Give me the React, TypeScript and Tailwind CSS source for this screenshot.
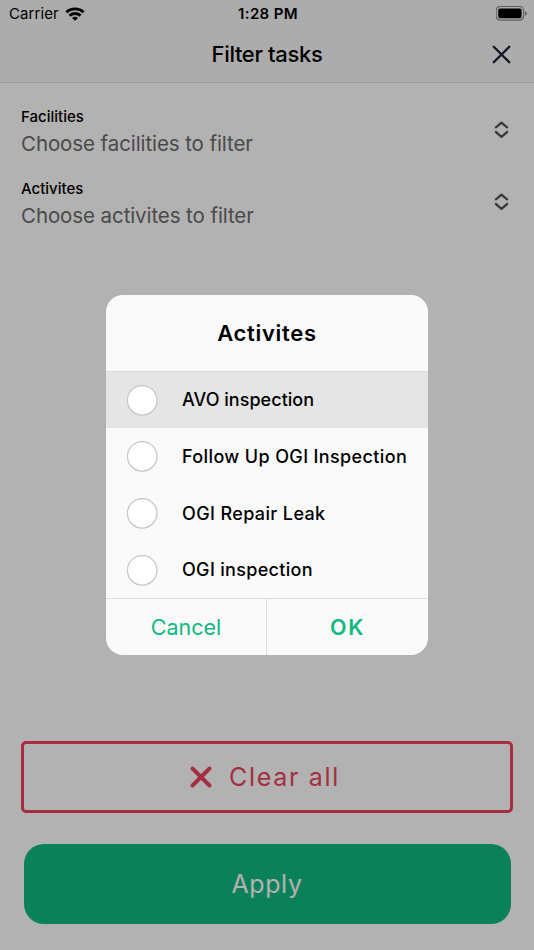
import { useState } from "react";
import { X } from "lucide-react";

const activities = [
  { name: "AVO inspection", spacing: "tracking-[0.03px]" },
  { name: "Follow Up OGI Inspection", spacing: "tracking-[0.37px]" },
  { name: "OGI Repair Leak", spacing: "tracking-[0.37px]" },
  { name: "OGI inspection", spacing: "tracking-[0.32px]" },
];

const StatusBar: React.FC = () => {
  return (
    <div className="grid h-[27px] grid-cols-3 items-center pr-[7px] pl-[9px] text-[15px] leading-none text-black">
      <div className="flex items-center gap-[6px]">
        <span className="tracking-[0.1px]">Carrier</span>
        <svg width="20" height="14" viewBox="0 0 19 14" fill="none" stroke="#000" strokeWidth="2.8">
          <path d="M0.8 5.2C5.6 0.7 13.4 0.7 18.2 5.2" />
          <path d="M4 8.6C7.1 5.8 11.9 5.8 15 8.6" />
          <path d="M9.5 13.8L6.5 10.9C8.3 9.5 10.7 9.5 12.5 10.9Z" fill="#000" stroke="none" />
        </svg>
      </div>
      <span className="text-center font-semibold tracking-[0.35px]">1:28 PM</span>
      <svg className="justify-self-end" width="31" height="15" viewBox="0 0 31 15">
        <rect x="0.2" y="0.4" width="27.4" height="13.8" rx="4" fill="none" stroke="#000" strokeOpacity="0.45" strokeWidth="1.2" />
        <rect x="2.2" y="2.4" width="23.4" height="9.8" rx="1.6" fill="#000" />
        <path d="M29 5.2C31.2 6 31.2 8.8 29 9.6Z" fill="#000" fillOpacity="0.5" />
      </svg>
    </div>
  );
};

const SelectField: React.FC<{ label: string; placeholder: string }> = ({ label, placeholder }) => {
  return (
    <button className="flex h-[72px] w-full items-center justify-between pr-[25px] pl-[21px] text-left">
      <span className="flex flex-col pt-[5px]">
        <span className="text-[15px] leading-[22px] font-medium text-black">{label}</span>
        <span className="text-[20.5px] leading-8 tracking-[-0.09px] text-[#6a6a6a]">{placeholder}</span>
      </span>
      <svg
        width="15"
        height="18"
        viewBox="0 0 15 18"
        fill="none"
        stroke="#505050"
        strokeWidth="2.2"
        strokeLinejoin="round"
      >
        <path d="M1.2 7L7.5 1.6L13.8 7" />
        <path d="M1.2 10.4L7.5 15.8L13.8 10.4" />
      </svg>
    </button>
  );
};

const App: React.FC = () => {
  const [selected, setSelected] = useState<string[]>([]);

  const toggle = (name: string) => {
    setSelected((s) => (s.includes(name) ? s.filter((n) => n !== name) : [...s, name]));
  };

  return (
    <div className="relative h-[950px] w-full overflow-hidden bg-white font-['Inter',sans-serif]">
      <div className="flex h-full flex-col">
        {/* Header */}
        <header className="h-[83px] border-b border-[#dedede] bg-[#f7f7f7]">
          <StatusBar />
          <div className="grid h-[54px] grid-cols-[1fr_auto_1fr] items-center px-[17px]">
            <h1 className="col-start-2 text-[22px] leading-none font-medium tracking-[-0.35px] text-black">
              Filter tasks
            </h1>
            <button className="justify-self-end">
              <X size={31} strokeWidth={1.8} className="text-[#18213a]" />
            </button>
          </div>
        </header>

        {/* Filters */}
        <div className="pt-[11px]">
          <SelectField label="Facilities" placeholder="Choose facilities to filter" />
          <SelectField label="Activites" placeholder="Choose activites to filter" />
        </div>

        {/* Buttons */}
        <div className="mt-auto flex flex-col pb-[26px]">
          <button className="mx-[21px] flex h-[72px] items-center justify-center gap-[11px] rounded-[5px] border-[3px] border-[#ee425c] pr-[10px] text-[#ee425c]">
            <X size={34} strokeWidth={2.8} />
            <span className="text-[25px] leading-none tracking-[1.7px]">Clear all</span>
          </button>
          <button className="mx-[23.5px] mt-[31px] h-20 rounded-[20px] bg-[#10b981] text-[25px] leading-none tracking-[0.6px] text-white">
            Apply
          </button>
        </div>
      </div>

      {/* Dialog */}
      <div className="absolute inset-0 flex items-center justify-center bg-black/30">
        <div className="flex h-[360px] w-[322px] flex-col overflow-hidden rounded-[17px] bg-[#fafafa]">
          <h2 className="flex h-[76px] items-center justify-center text-[22px] leading-none font-semibold tracking-[0.7px] text-black">
            Activites
          </h2>
          <ul className="grid flex-1 grid-rows-[56px_57px_57px_56px] border-y border-[#dcdcde]">
            {activities.map((a, i) => (
              <li key={a.name} className={i === 0 ? "bg-[#e5e5e5]" : ""}>
                <button
                  onClick={() => toggle(a.name)}
                  className="flex h-full w-full items-center gap-[24.5px] pl-[20.5px] text-black"
                >
                  <svg className="shrink-0" width="31" height="31" viewBox="0 0 31 31">
                    <circle
                      cx="15.2"
                      cy="15.3"
                      r="14.8"
                      fill={selected.includes(a.name) ? "#10b981" : "#fff"}
                      stroke="#c6c6c9"
                      strokeWidth="1.3"
                    />
                  </svg>
                  <span className={`text-[18px] leading-none font-medium whitespace-nowrap ${a.spacing}`}>
                    {a.name}
                  </span>
                </button>
              </li>
            ))}
          </ul>
          <div className="grid h-14 grid-cols-2 text-[21.5px] leading-none text-[#10b981]">
            <button className="border-r border-[#dcdcde] pt-px">Cancel</button>
            <button className="pt-px font-semibold tracking-[1.6px]">OK</button>
          </div>
        </div>
      </div>
    </div>
  );
};

export default App;
